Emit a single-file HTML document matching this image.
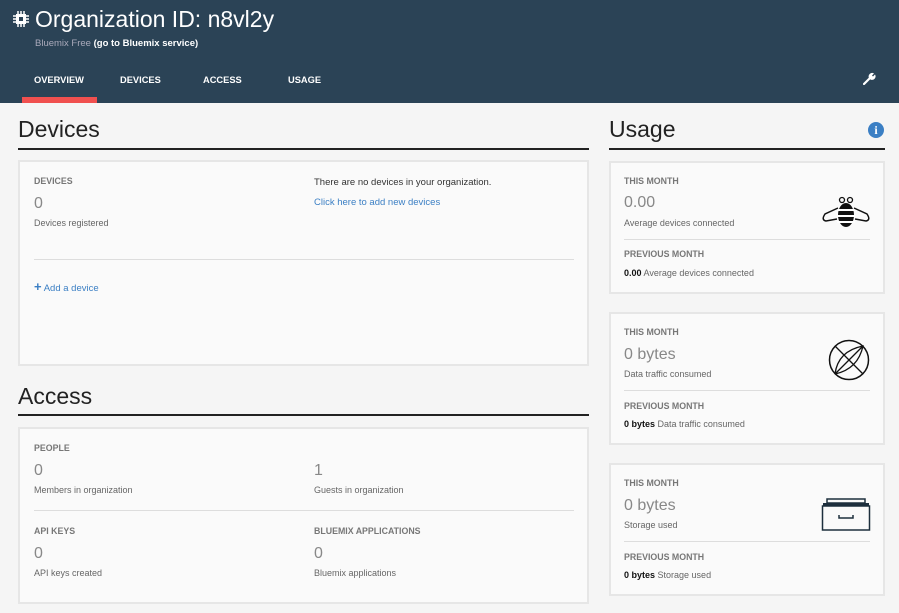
<!DOCTYPE html><html><head><style>
*{margin:0;padding:0;box-sizing:border-box}
body{width:899px;height:613px;overflow:hidden;background:#f5f5f5;font-family:"Liberation Sans",sans-serif;position:relative;color:#333}
.hdr{position:absolute;left:0;top:0;width:899px;height:103px;background:#2b4356}
.a{position:absolute;white-space:nowrap}
.tab{font-size:9.3px;font-weight:bold;color:#fff;top:75px}
.h{font-size:23px;font-weight:300;color:#222}
.line{position:absolute;height:2px;background:#222}
.box{position:absolute;background:#fafafa;border:2px solid #e6e6e6}
.lbl{font-size:8.8px;font-weight:bold;color:#777}
.big{font-size:16px;color:#888;font-weight:300}
.sm{font-size:9px;color:#666}
.sep{position:absolute;height:1px;background:#ddd}
.lnk{font-size:9.5px;color:#3b7fc4}
</style></head><body>
<div class="hdr"></div>
<svg class="a" style="left:13px;top:11px" width="16" height="16" viewBox="0 0 16 16"><rect x="3" y="3" width="10" height="10" fill="#fff"/><rect x="6" y="6" width="4" height="4" fill="#2b4356"/><g stroke="#fff" stroke-width="1.5"><path d="M5 0v3M8 0v3M11 0v3M5 13v3M8 13v3M11 13v3M0 5h3M0 8h3M0 11h3M13 5h3M13 8h3M13 11h3"/></g></svg>
<div class="a" style="left:35px;top:6px;font-size:23px;color:#fff;font-weight:300">Organization ID: n8vl2y</div>
<div class="a" style="left:35px;top:38px;font-size:9.5px;color:#aab"><span>Bluemix Free</span> <b style="color:#fff">(go to Bluemix service)</b></div>
<div class="a tab" style="left:34px">OVERVIEW</div>
<div class="a tab" style="left:120px">DEVICES</div>
<div class="a tab" style="left:203px">ACCESS</div>
<div class="a tab" style="left:288px">USAGE</div>
<div class="a" style="left:22px;top:97px;width:75px;height:6px;background:#f0504f"></div>
<svg class="a" style="left:863px;top:72px" width="13" height="13" viewBox="0 0 13 13"><path d="M1 12L7 6" stroke="#fff" stroke-width="2.2" stroke-linecap="round"/><path d="M6 6A3.5 3.5 0 0 1 11 1.5L9 3.5L10 4.5L12 2.5A3.5 3.5 0 0 1 7.5 7.5Z" fill="#fff"/></svg>

<div class="a h" style="left:18px;top:116px">Devices</div>
<div class="line" style="left:18px;top:148px;width:571px"></div>
<div class="box" style="left:18px;top:160px;width:571px;height:206px"></div>
<div class="a lbl" style="left:34px;top:176px">DEVICES</div>
<div class="a big" style="left:34px;top:195px">0</div>
<div class="a sm" style="left:34px;top:218px">Devices registered</div>
<div class="a" style="left:314px;top:177px;font-size:9.5px;color:#333">There are no devices in your organization.</div>
<div class="a lnk" style="left:314px;top:197px">Click here to add new devices</div>
<div class="sep" style="left:34px;top:259px;width:540px"></div>
<div class="a lnk" style="left:34px;top:279px"><b style="font-size:13px">+</b> Add a device</div>

<div class="a h" style="left:18px;top:383px">Access</div>
<div class="line" style="left:18px;top:414px;width:571px"></div>
<div class="box" style="left:18px;top:427px;width:571px;height:177px"></div>
<div class="a lbl" style="left:34px;top:443px">PEOPLE</div>
<div class="a big" style="left:34px;top:462px">0</div>
<div class="a sm" style="left:34px;top:485px">Members in organization</div>
<div class="a big" style="left:314px;top:462px">1</div>
<div class="a sm" style="left:314px;top:485px">Guests in organization</div>
<div class="sep" style="left:34px;top:510px;width:540px"></div>
<div class="a lbl" style="left:34px;top:526px">API KEYS</div>
<div class="a big" style="left:34px;top:545px">0</div>
<div class="a sm" style="left:34px;top:568px">API keys created</div>
<div class="a lbl" style="left:314px;top:526px">BLUEMIX APPLICATIONS</div>
<div class="a big" style="left:314px;top:545px">0</div>
<div class="a sm" style="left:314px;top:568px">Bluemix applications</div>

<div class="a h" style="left:609px;top:116px">Usage</div>
<div class="a" style="left:868px;top:122px;width:16px;height:16px;border-radius:50%;background:#3b7fc4;color:#fff;font-size:12px;font-weight:bold;text-align:center;line-height:16px;font-family:'Liberation Serif',serif">i</div>
<div class="line" style="left:609px;top:148px;width:276px"></div>

<div class="box" style="left:609px;top:161px;width:276px;height:133px"></div>
<div class="a lbl" style="left:624px;top:176px">THIS MONTH</div>
<div class="a big" style="left:624px;top:194px">0.00</div>
<div class="a sm" style="left:624px;top:218px">Average devices connected</div>
<div class="sep" style="left:624px;top:239px;width:246px"></div>
<div class="a lbl" style="left:624px;top:249px">PREVIOUS MONTH</div>
<div class="a sm" style="left:624px;top:268px"><b style="color:#111">0.00</b> Average devices connected</div>
<svg class="a" style="left:820px;top:196px" width="52" height="34" viewBox="0 0 52 34"><circle cx="22" cy="4" r="2.5" fill="none" stroke="#111" stroke-width="1.3"/><circle cx="30" cy="4" r="2.5" fill="none" stroke="#111" stroke-width="1.3"/><ellipse cx="26" cy="19" rx="8" ry="12" fill="#111"/><g stroke="#fff" stroke-width="2"><path d="M17 14h18M17 20h18M17 26h18"/></g><path d="M18 12L5 18Q1 24 6 25L17 23M34 12L47 18Q51 24 46 25L35 23" fill="none" stroke="#111" stroke-width="1.5"/></svg>

<div class="box" style="left:609px;top:312px;width:276px;height:133px"></div>
<div class="a lbl" style="left:624px;top:327px">THIS MONTH</div>
<div class="a big" style="left:624px;top:346px">0 bytes</div>
<div class="a sm" style="left:624px;top:369px">Data traffic consumed</div>
<div class="sep" style="left:624px;top:390px;width:246px"></div>
<div class="a lbl" style="left:624px;top:401px">PREVIOUS MONTH</div>
<div class="a sm" style="left:624px;top:419px"><b style="color:#111">0 bytes</b> Data traffic consumed</div>
<svg class="a" style="left:828px;top:339px" width="42" height="42" viewBox="0 0 42 42"><circle cx="21" cy="21" r="19.5" fill="none" stroke="#111" stroke-width="1.5"/><path d="M7 7L35 35M7 35L35 7M7 35Q10 12 35 7Q30 30 7 35" fill="none" stroke="#111" stroke-width="1.3"/></svg>

<div class="box" style="left:609px;top:463px;width:276px;height:133px"></div>
<div class="a lbl" style="left:624px;top:478px">THIS MONTH</div>
<div class="a big" style="left:624px;top:497px">0 bytes</div>
<div class="a sm" style="left:624px;top:520px">Storage used</div>
<div class="sep" style="left:624px;top:541px;width:246px"></div>
<div class="a lbl" style="left:624px;top:552px">PREVIOUS MONTH</div>
<div class="a sm" style="left:624px;top:570px"><b style="color:#111">0 bytes</b> Storage used</div>
<svg class="a" style="left:821px;top:498px" width="50" height="33" viewBox="0 0 50 33"><rect x="6" y="1" width="38" height="4" fill="none" stroke="#1d2f3d" stroke-width="1.5"/><rect x="2" y="5" width="46" height="3" fill="#1d2f3d"/><rect x="1.5" y="8" width="47" height="24" fill="none" stroke="#1d2f3d" stroke-width="1.5"/><path d="M18 17v3h14v-3" fill="none" stroke="#1d2f3d" stroke-width="1.5"/></svg>
</body></html>
